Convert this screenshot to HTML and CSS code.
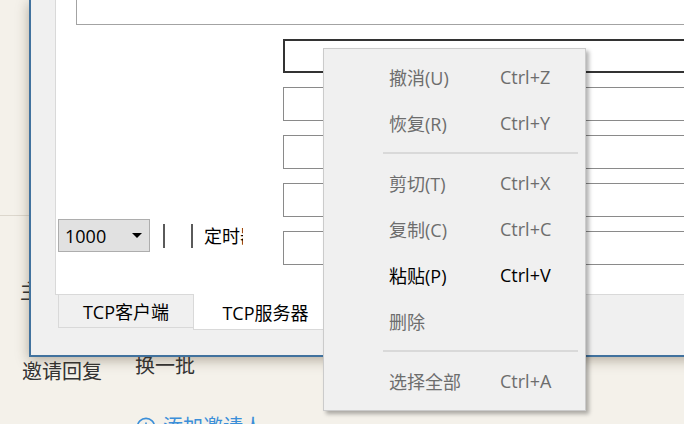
FILE: index.html
```html
<!DOCTYPE html>
<html lang="zh-CN">
<head>
<meta charset="utf-8">
<title>TCP</title>
<link rel="stylesheet" href="styles.css">
</head>
<body>
<div class="page">
  <div class="page-rule"></div>
  <div class="page-glyph">主</div>
  <div class="page-row">
    <span class="page-link">邀请回复</span>
    <span class="page-link raised">换一批</span>
  </div>
  <div class="page-add">
    <svg class="add-icon" width="20" height="20" viewBox="0 0 20 20"><circle cx="10" cy="10" r="8.6" fill="none" stroke="#3b8fd9" stroke-width="1.6"/><path d="M10 5.5v9M5.5 10h9" stroke="#3b8fd9" stroke-width="1.6"/></svg>
    <span>添加邀请人</span>
  </div>
</div>

<div class="window">
  <div class="client">
    <div class="tab-panel">
      <div class="log-box"></div>
      <div class="panel-body">
        <div class="controls">
          <div class="combo"><span>1000</span><span class="arrow"></span></div>
          <span class="vline first"></span>
          <span class="vline"></span>
          <span class="label-clip">定时器</span>
        </div>
        <div class="fields">
          <div class="field focused"></div>
          <div class="field"></div>
          <div class="field"></div>
          <div class="field"></div>
          <div class="field"></div>
        </div>
      </div>
    </div>
    <div class="tabs">
      <div class="tab">TCP客户端</div>
      <div class="tab active">TCP服务器</div>
    </div>
  </div>
</div>

<div class="menu">
  <div class="item disabled"><span class="label">撤消(U)</span><span class="key">Ctrl+Z</span></div>
  <div class="item disabled"><span class="label">恢复(R)</span><span class="key">Ctrl+Y</span></div>
  <div class="sep"></div>
  <div class="item disabled"><span class="label">剪切(T)</span><span class="key">Ctrl+X</span></div>
  <div class="item disabled"><span class="label">复制(C)</span><span class="key">Ctrl+C</span></div>
  <div class="item"><span class="label">粘贴(P)</span><span class="key">Ctrl+V</span></div>
  <div class="item disabled"><span class="label">删除</span><span class="key"></span></div>
  <div class="sep"></div>
  <div class="item disabled"><span class="label">选择全部</span><span class="key">Ctrl+A</span></div>
</div>
</body>
</html>
```

FILE: styles.css
```css
html, body {
  margin: 0;
  padding: 0;
}
body {
  width: 684px;
  height: 424px;
  overflow: hidden;
  position: relative;
  background: #f4f1ea;
  font-family: "Noto Sans CJK SC", sans-serif;
}

/* background web page */
.page {
  padding-top: 215px;
  color: #333;
}
.page-rule {
  height: 1px;
  background: #dcd7cd;
}
.page-glyph {
  font-size: 20px;
  line-height: 20px;
  margin-top: 65px;
  padding-left: 20px;
}
.page-row {
  display: flex;
  align-items: flex-start;
  padding-left: 22px;
  margin-top: 60px;
}
.page-link {
  font-size: 20px;
  line-height: 20px;
}
.page-link.raised {
  margin-left: 33px;
  margin-top: -6px;
}
.page-add {
  display: flex;
  align-items: flex-start;
  margin-top: 35px;
  padding-left: 136px;
  gap: 7px;
  color: #3b8fd9;
  font-size: 20px;
  line-height: 20px;
}
.add-icon {
  flex: none;
  margin-top: 1px;
}

/* application window */
.window {
  position: absolute;
  left: 29px;
  top: 0;
  width: 720px;
  height: 357px;
  box-sizing: border-box;
  border-left: 2px solid #41729e;
  border-bottom: 2px solid #41729e;
  background: #f0f0f0;
  box-shadow: 0 3px 12px rgba(70, 55, 30, 0.38);
  font-family: "Open Sans", "Noto Sans CJK SC", sans-serif;
  font-size: 18px;
  color: #000;
}
.client {
  padding-left: 24px;
}
.tab-panel {
  display: flex;
  flex-direction: column;
  height: 295px;
  box-sizing: border-box;
  background: #fff;
  border-left: 1px solid #d9d9d9;
  border-bottom: 1px solid #d9d9d9;
}
.log-box {
  margin: -30px 0 0 20px;
  height: 55px;
  box-sizing: border-box;
  border: 1px solid #a3a3a3;
  flex: none;
}
.panel-body {
  display: flex;
}
.controls {
  width: 227px;
  flex: none;
  padding-top: 194px;
  display: flex;
  align-items: center;
  align-self: flex-start;
  height: 33px;
}
.combo {
  margin-left: 2px;
  width: 92px;
  height: 33px;
  box-sizing: border-box;
  border: 1px solid #adadad;
  background: #e1e1e1;
  display: flex;
  align-items: center;
  padding-left: 6px;
  line-height: 1;
}
.arrow {
  margin-left: auto;
  margin-right: 7px;
  width: 0;
  height: 0;
  border-left: 5px solid transparent;
  border-right: 5px solid transparent;
  border-top: 5px solid #000;
}
.vline {
  width: 2px;
  height: 24px;
  background: #5a5a5a;
  margin-left: 26px;
}
.vline.first {
  margin-left: 13px;
}
.label-clip {
  margin-left: 11px;
  width: 39px;
  overflow: hidden;
  white-space: nowrap;
  line-height: 1;
}
.fields {
  flex: 1;
  margin-top: 14px;
  display: flex;
  flex-direction: column;
  gap: 14px;
}
.field {
  height: 34px;
  box-sizing: border-box;
  border: 1px solid #8a8a8a;
}
.field.focused {
  border: 2px solid #333;
}

.tabs {
  display: flex;
  align-items: flex-start;
}
.tab {
  box-sizing: border-box;
  display: flex;
  align-items: center;
  justify-content: center;
  white-space: nowrap;
}
.tab:first-child {
  margin-left: 3px;
  width: 136px;
  height: 33px;
  background: #f0f0f0;
  border: 1px solid #d9d9d9;
  border-top: none;
}
.tab.active {
  margin-left: -1px;
  margin-top: -1px;
  width: 145px;
  height: 36px;
  background: #fff;
  border: 1px solid #d9d9d9;
  border-top: none;
}

/* context menu */
.menu {
  position: absolute;
  left: 323px;
  top: 48px;
  width: 263px;
  height: 363px;
  box-sizing: border-box;
  border: 1px solid #cbcbcb;
  background: #f0f0f0;
  padding: 5px 0;
  box-shadow: 3px 3px 4px rgba(0, 0, 0, 0.3);
  font-family: "Open Sans", "Noto Sans CJK SC", sans-serif;
  font-size: 18px;
}
.item {
  height: 46px;
  display: flex;
  align-items: center;
  padding-left: 65px;
  color: #000;
  white-space: nowrap;
}
.item.disabled {
  color: #6d6d6d;
}
.label {
  width: 111px;
}
.sep {
  height: 14px;
  display: flex;
  align-items: center;
}
.sep::before {
  content: "";
  flex: 1;
  height: 2px;
  margin: 0 7px 0 59px;
  background: #d9d9d9;
}
```
